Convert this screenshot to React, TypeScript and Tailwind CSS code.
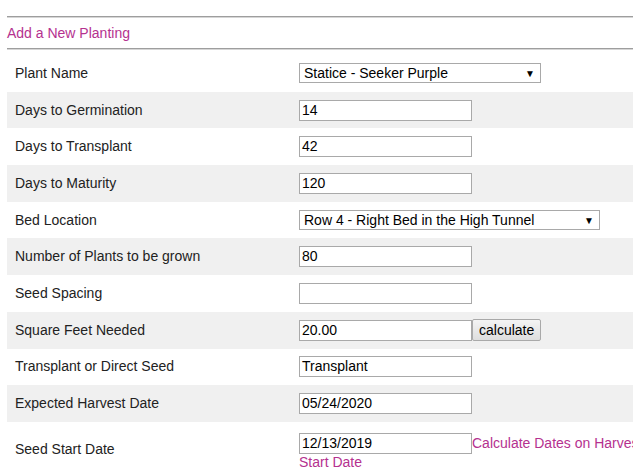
import React from 'react';

interface Row {
  label: string;
  value?: string;
  kind: 'input' | 'select' | 'calc';
  width?: string;
}

const rows: Row[] = [
  { label: 'Plant Name', value: 'Statice - Seeker Purple', kind: 'select', width: 'w-[242px]' },
  { label: 'Days to Germination', value: '14', kind: 'input' },
  { label: 'Days to Transplant', value: '42', kind: 'input' },
  { label: 'Days to Maturity', value: '120', kind: 'input' },
  { label: 'Bed Location', value: 'Row 4 - Right Bed in the High Tunnel', kind: 'select', width: 'w-[301px]' },
  { label: 'Number of Plants to be grown', value: '80', kind: 'input' },
  { label: 'Seed Spacing', value: '', kind: 'input' },
  { label: 'Square Feet Needed', value: '20.00', kind: 'calc' },
  { label: 'Transplant or Direct Seed', value: 'Transplant', kind: 'input' },
  { label: 'Expected Harvest Date', value: '05/24/2020', kind: 'input' },
];

function TextBox({ value }: { value?: string }) {
  return (
    <div className="w-[173px] h-[21px] border border-[#a9a9a9] bg-white px-[2px] leading-[19px] text-black">
      {value}
    </div>
  );
}

function SelectBox({ value, width }: { value?: string; width?: string }) {
  return (
    <div className={`${width} h-[20px] border border-[#a9a9a9] bg-white pl-[4px] pr-[5px] flex items-center justify-between text-black`}>
      <span>{value}</span>
      <span className="text-[10px]">▼</span>
    </div>
  );
}

export default function App() {
  return (
    <div className="w-[633px] h-[474px] overflow-hidden bg-white text-[14px] text-[#222] font-['Liberation_Sans',Arial,sans-serif]">
      <div className="pl-[7px] pt-[16px]">
        <div className="border-t border-b border-t-[#9e9e9e] border-b-[#d6d6d6]" />
        <div className="h-[30px] flex items-center text-[#b5318f]">Add a New Planting</div>
        <div className="border-t border-b border-t-[#9e9e9e] border-b-[#d6d6d6]" />

        <div className="mt-[5px] w-[700px]">
          {rows.map((r, i) => (
            <div
              key={r.label}
              className={`flex items-center h-[36.7px] ${i % 2 === 1 ? 'bg-[#f0f0f0]' : 'bg-white'}`}
            >
              <div className="w-[292px] pl-[8px]">{r.label}</div>
              {r.kind === 'select' && <SelectBox value={r.value} width={r.width} />}
              {r.kind === 'input' && <TextBox value={r.value} />}
              {r.kind === 'calc' && (
                <div className="flex items-center">
                  <TextBox value={r.value} />
                  <button className="h-[22px] px-[6px] border border-[#a9a9a9] rounded-[2px] bg-gradient-to-b from-[#f4f4f4] to-[#dedede] text-black leading-[20px]">
                    calculate
                  </button>
                </div>
              )}
            </div>
          ))}

          <div className="flex items-center h-[56px]">
            <div className="w-[292px] pl-[8px]">Seed Start Date</div>
            <div className="w-[360px] pt-[4px]">
              <div className="flex items-center">
                <TextBox value="12/13/2019" />
                <span className="text-[#b5318f] whitespace-nowrap">Calculate Dates on Harvest</span>
              </div>
              <div className="text-[#b5318f] leading-[17px]">Start Date</div>
            </div>
          </div>
        </div>
      </div>
    </div>
  );
}
